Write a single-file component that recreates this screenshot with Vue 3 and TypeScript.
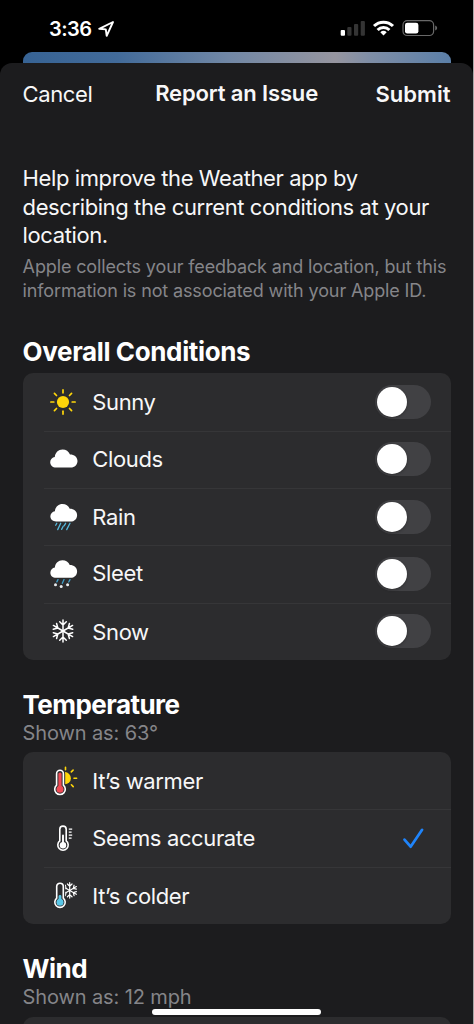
<script setup lang="ts">
interface Condition {
  id: string
  label: string
  on: boolean
}
interface Reading {
  id: string
  label: string
}

const conditions: Condition[] = [
  { id: 'sunny', label: 'Sunny', on: false },
  { id: 'clouds', label: 'Clouds', on: false },
  { id: 'rain', label: 'Rain', on: false },
  { id: 'sleet', label: 'Sleet', on: false },
  { id: 'snow', label: 'Snow', on: false },
]
const readings: Reading[] = [
  { id: 'warmer', label: 'It’s warmer' },
  { id: 'accurate', label: 'Seems accurate' },
  { id: 'colder', label: 'It’s colder' },
]
const selected = 'accurate'
const eighths = [0, 45, 90, 135, 180, 225, 270, 315]
const sixths = [0, 60, 120, 180, 240, 300]
const cloud =
  'M13 28.6C9.6 28.6 7.2 26.3 7.2 23.3C7.2 20.5 9.3 18.3 11.8 18C12.2 13.700 15.400 10.600 19.500 10.600C23 10.600 25.800 12.500 27 15.600C31.300 15.600 34.500 18.300 34.500 22.100C34.500 25.900 31.600 28.600 27.800 28.600Z'
</script>

<template>
  <div class="screen">
    <div class="status">
      <div class="clock">
        <span class="time">3:36</span>
        <svg class="arrow" width="18" height="18" viewBox="0 0 18 18">
          <path d="M16 2 L2.200 8.800 L8.800 9.400 L9.700 15.900 Z" fill="none" stroke="#fff" stroke-width="1.900" stroke-linejoin="round" />
        </svg>
      </div>
      <div class="indicators">
        <svg width="98" height="18" viewBox="340 19 98 18">
          <rect x="340.700" y="30" width="4.300" height="5.800" rx="1" fill="#fff" />
          <rect x="347.300" y="27" width="4.200" height="8.800" rx="1" fill="#343434" />
          <rect x="354" y="24" width="4.200" height="11.800" rx="1" fill="#343434" />
          <rect x="360.700" y="21" width="4.200" height="14.800" rx="1" fill="#343434" />
          <g fill="none" stroke="#fff" stroke-width="3">
            <path d="M374 26 A13.600 13.600 0 0 1 393 26" />
            <path d="M377.600 30 A8.400 8.400 0 0 1 389.400 30" />
          </g>
          <path d="M380.300 32.200 A4.800 4.800 0 0 1 386.700 32.200 L383.500 35.600 Z" fill="#fff" />
          <rect x="403" y="20.700" width="30.600" height="14.800" rx="4.300" fill="none" stroke="#686868" stroke-width="1.200" />
          <rect x="405" y="22.700" width="13.400" height="10.900" rx="2.300" fill="#fff" />
          <path d="M435.200 25.600 Q437.200 26.300 437.200 28.100 Q437.200 29.900 435.200 30.600 Z" fill="#686868" />
        </svg>
      </div>
    </div>
    <div class="behind"></div>

    <main class="sheet">
      <header class="nav">
        <span class="cancel">Cancel</span>
        <span class="title">Report an Issue</span>
        <span class="submit">Submit</span>
      </header>

      <p class="lead">
        <span>Help improve the Weather app by</span><br />
        <span>describing the current conditions at your</span><br />
        <span>location.</span>
      </p>
      <p class="note">
        <span>Apple collects your feedback and location, but this</span><br />
        <span>information is not associated with your Apple ID.</span>
      </p>

      <h2 class="h-overall">Overall Conditions</h2>
      <section class="card overall">
        <div v-for="c in conditions" :key="c.id" class="row">
          <svg class="icon" width="40" height="40" viewBox="0 0 40 40">
            <g v-if="c.id === 'sunny'">
              <circle cx="20" cy="20" r="6.100" fill="#ffd60a" />
              <path v-for="a in eighths" :key="a" d="M20 10.800V7.900" :transform="`rotate(${a} 20 20)`" stroke="#ffd60a" stroke-width="1.700" stroke-linecap="round" />
            </g>
            <path v-else-if="c.id === 'clouds'" :d="cloud" fill="#fff" />
            <g v-else-if="c.id === 'rain'">
              <path :d="cloud" fill="#fff" transform="translate(.300 -3.500) scale(.980)" />
              <path d="M13.800 26.300L12.700 28.300M17.700 26.300L14.700 32.600M22.600 26.300L21.200 28.700M27 26.300L23.700 32.600M20.200 29.300L18.600 32.400" stroke="#56b9dd" stroke-width="1.300" stroke-linecap="round" />
            </g>
            <g v-else-if="c.id === 'sleet'">
              <path :d="cloud" fill="#fff" transform="translate(.300 -4.200) scale(.980)" />
              <path d="M15 25.600L13.800 27.900M21 25.600L19.300 29.300M27 25.600L25.700 28" stroke="#3f9fc8" stroke-width="1.300" stroke-linecap="round" />
              <g fill="#e9edf0">
                <circle cx="12.500" cy="30.800" r="1.500" />
                <circle cx="18.200" cy="32.400" r="1.500" />
                <circle cx="24.600" cy="30.800" r="1.500" />
              </g>
            </g>
            <g v-else fill="none" stroke="#fff" stroke-width="1.500" stroke-linecap="round" stroke-linejoin="round">
              <path v-for="a in sixths" :key="a" d="M20 20V8.900M16.700 10.700L20 14L23.300 10.700" :transform="`rotate(${a} 20 20)`" />
            </g>
          </svg>
          <span :class="['label', c.id]">{{ c.label }}</span>
          <span class="toggle" :class="{ on: c.on }" role="switch" :aria-checked="c.on"><i></i></span>
        </div>
      </section>

      <h2 class="h-temp">Temperature</h2>
      <p class="shown">Shown as: 63°</p>
      <section class="card">
        <div v-for="r in readings" :key="r.id" class="row">
          <svg class="icon" width="40" height="40" viewBox="0 0 40 40">
            <g v-if="r.id === 'warmer'">
              <circle cx="21.800" cy="17.200" r="6.100" fill="#ffd60a" />
              <path d="M22.500 8.700V6.200M28.300 10.900L30.100 9.100M31 17.200H33.600M28.400 23.800L30.200 25.600" stroke="#ffd60a" stroke-width="1.600" stroke-linecap="round" />
              <path d="M13.300 24.100V12.700A3.700 3.700 0 0 1 20.700 12.700V24.100A5.500 5.500 0 1 1 13.300 24.100Z" fill="#2c2c2e" stroke="#2c2c2e" stroke-width="3" />
              <path d="M13.600 24.200V12.700A3.400 3.400 0 0 1 20.400 12.700V24.200A5.300 5.300 0 1 1 13.600 24.200Z" fill="#2c2c2e" stroke="#fff" stroke-width="1.600" />
              <path d="M17 13V26" stroke="#ef4b55" stroke-width="3.200" stroke-linecap="round" />
              <circle cx="17" cy="28.300" r="3.500" fill="#ef4b55" />
            </g>
            <g v-else-if="r.id === 'accurate'">
              <path d="M16.800 22.900V11.300A3.200 3.200 0 0 1 23.200 11.300V22.900A5.200 5.200 0 1 1 16.800 22.900Z" fill="none" stroke="#fff" stroke-width="1.600" />
              <path d="M20 17.500V26" stroke="#fff" stroke-width="1.900" stroke-linecap="round" />
              <circle cx="20" cy="27.200" r="3.200" fill="#fff" />
              <path d="M25.800 11.100H29.200M25.800 14.100H28.600M25.800 17.100H29.200M25.800 20.100H28.600" stroke="#fff" stroke-width="1.200" />
            </g>
            <g v-else>
              <g fill="none" stroke="#fff" stroke-width="1.200" stroke-linecap="round" stroke-linejoin="round">
                <path v-for="a in sixths" :key="a" d="M26.700 15.400V7.700M24.400 9L26.700 11.200L29 9" :transform="`rotate(${a} 26.700 15.400)`" />
              </g>
              <path d="M13.300 23.100V11.500A3.700 3.700 0 0 1 20.700 11.500V23.100A5.500 5.500 0 1 1 13.300 23.100Z" fill="#2c2c2e" stroke="#2c2c2e" stroke-width="3" />
              <path d="M13.700 23.200V11.500A3.300 3.300 0 0 1 20.300 11.500V23.200A5.200 5.200 0 1 1 13.700 23.200Z" fill="#2c2c2e" stroke="#fff" stroke-width="1.600" />
              <path d="M17 21.500V26" stroke="#5ac8e8" stroke-width="2.800" stroke-linecap="round" />
              <circle cx="17" cy="27.300" r="3.500" fill="#5ac8e8" />
            </g>
          </svg>
          <span :class="['label', r.id]">{{ r.label }}</span>
          <svg v-if="r.id === selected" class="check" width="24" height="24" viewBox="0 0 24 24">
            <path d="M3.500 13.600L9.600 20.700L21.100 3.800" fill="none" stroke="#1f84fa" stroke-width="2.700" stroke-linecap="round" stroke-linejoin="round" />
          </svg>
        </div>
      </section>

      <h2 class="h-wind">Wind</h2>
      <p class="shown">Shown as: 12 mph</p>
      <section class="card next"></section>
    </main>
    <div class="home"></div>
  </div>
</template>

<style>
html,
body {
  background: #000;
  overflow: hidden;
}
</style>

<style scoped>
.screen {
  position: relative;
  box-sizing: border-box;
  width: 474px;
  height: 1024px;
  overflow: hidden;
  background: #000;
  border-right: 1px solid #a8a8a8;
  color: #f7f7f8;
  font-family: Inter, 'Liberation Sans', sans-serif;
  display: flex;
  flex-direction: column;
}
.status {
  flex: none;
  height: 52px;
  padding: 0 35px 0 49px;
  display: flex;
  justify-content: space-between;
}
.clock {
  display: flex;
  gap: 3.500px;
}
.time {
  width: 44px;
  font-size: 20px;
  font-weight: 600;
  line-height: 28px;
  padding-top: 15px;
  letter-spacing: -0.5px;
  color: #fff;
}
.arrow {
  margin-top: 20px;
}
.indicators {
  margin-top: 19px;
}
.behind {
  flex: none;
  height: 25px;
  margin: 0 22px 0 23px;
  border-radius: 9px 9px 0 0;
  background: linear-gradient(90deg, #376394 0%, #426b9a 22%, #7187a5 48%, #96959f 73%, #7f8ea6 81%, #5b7fa8 100%);
}
.sheet {
  flex: 1;
  min-height: 0;
  margin-top: -14px;
  padding: 0 22.400px 0 22.600px;
  border-radius: 12px 12px 0 0;
  background: #1c1c1e;
  display: flex;
  flex-direction: column;
}
.nav {
  flex: none;
  display: grid;
  grid-template-columns: 1fr auto 1fr;
  height: 101px;
  font-size: 22px;
  line-height: 28px;
  padding-top: 17px;
  box-sizing: border-box;
  white-space: nowrap;
}
.cancel {
  letter-spacing: -0.4px;
}
.title {
  font-weight: 600;
  letter-spacing: -0.140px;
  margin-top: -1px;
}
.submit {
  font-weight: 600;
  text-align: right;
  letter-spacing: 0.050px;
}
p,
h2 {
  margin: 0;
  flex: none;
  white-space: nowrap;
}
.lead {
  font-size: 22px;
  line-height: 28.600px;
  letter-spacing: -0.4px;
}
.note {
  margin-top: 5.200px;
  font-size: 18px;
  line-height: 24.300px;
  letter-spacing: -0.130px;
  color: #858589;
}
h2 {
  font-size: 26px;
  line-height: 32px;
  font-weight: 700;
  letter-spacing: -0.550px;
  color: #fff;
}
.h-overall {
  margin-top: 32.400px;
  letter-spacing: -0.370px;
}
.card {
  flex: none;
  border-radius: 10px;
  background: #2c2c2e;
}
.card.overall {
  margin-top: 5.200px;
}
.row {
  position: relative;
  display: flex;
  align-items: center;
  height: 57.400px;
  padding: 0 19.500px 0 20px;
}
.row + .row::before {
  content: '';
  position: absolute;
  left: 21px;
  right: 0;
  top: 0;
  height: 1px;
  background: #363638;
}
.icon {
  flex: none;
  margin-right: 9.700px;
}
.label {
  flex: 1;
  font-size: 22px;
  line-height: 28px;
  letter-spacing: -0.370px;
}
.label.sleet {
  margin-top: -2px;
}
.label.snow,
.label.colder {
  margin-top: 1px;
}
.toggle {
  width: 56px;
  height: 34px;
  border-radius: 17px;
  background: #414144;
  padding: 2px 1.500px;
  box-sizing: border-box;
  display: flex;
}
.toggle i {
  width: 30px;
  height: 30px;
  border-radius: 50%;
  background: #fff;
  box-shadow: 0 1px 3px rgba(0, 0, 0, 0.3);
}
.toggle.on {
  justify-content: flex-end;
  background: #30d158;
}
.check {
  margin-right: 6px;
}
.h-temp {
  margin-top: 28.800px;
}
.shown + .card {
  margin-top: 7px;
}
.h-wind {
  margin-top: 28.500px;
}
.shown {
  font-size: 20px;
  line-height: 24px;
  letter-spacing: -0.120px;
  color: #858589;
}
.shown + .next {
  margin-top: 8px;
  height: 60px;
}
.home {
  position: absolute;
  left: 152px;
  bottom: 9px;
  width: 169px;
  height: 6px;
  border-radius: 3px;
  background: #fff;
}
</style>
